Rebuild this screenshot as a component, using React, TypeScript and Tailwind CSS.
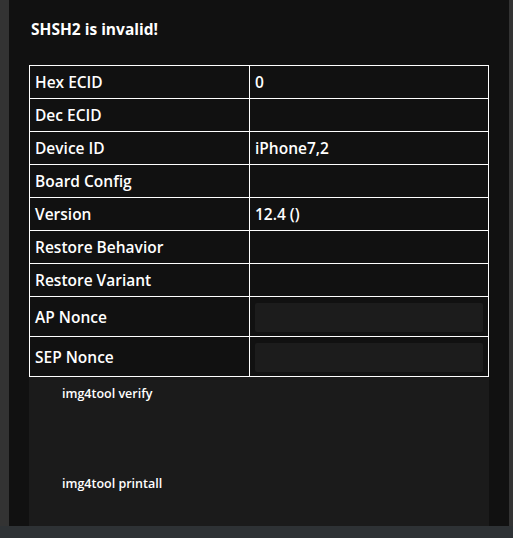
const ROWS: { label: string; value?: string; input?: boolean }[] = [
  { label: "Hex ECID", value: "0" },
  { label: "Dec ECID", value: "" },
  { label: "Device ID", value: "iPhone7,2" },
  { label: "Board Config", value: "" },
  { label: "Version", value: "12.4 ()" },
  { label: "Restore Behavior", value: "" },
  { label: "Restore Variant", value: "" },
  { label: "AP Nonce", input: true },
  { label: "SEP Nonce", input: true },
];

export default function App() {
  return (
    <div className="flex h-[538px] w-[513px] flex-col overflow-hidden font-['Open_Sans',sans-serif] text-white">
      <div className="flex h-[526px]">
        <div className="w-[9px] bg-[#333333]" />
        <div className="flex flex-1 flex-col bg-[#111111] pl-[20px]">
          <h1 className="pl-[2px] pt-[19px] text-[15.5px] font-bold leading-[20px]">SHSH2 is invalid!</h1>

          <table className="mt-[26px] w-[460px] table-fixed border-collapse">
            <tbody>
              {ROWS.map((r) => (
                <tr key={r.label} className={r.input ? "h-[40px]" : "h-[33px]"}>
                  <td className="w-[220px] border border-white px-[5px] py-0 text-[15.5px] font-semibold leading-[20px]">
                    {r.label}
                  </td>
                  <td className="border border-white px-[5px] py-0 text-[15.5px] font-semibold leading-[20px]">
                    {r.input ? (
                      <div className="mt-[1px] h-[29px] w-full rounded-[2px] bg-[#1c1c1c]" />
                    ) : (
                      r.value
                    )}
                  </td>
                </tr>
              ))}
            </tbody>
          </table>

          {/* verify / printall output */}
          <div className="w-[460px] flex-1 bg-[#1b1b1b] pl-[33px] pt-[8px] text-[12.5px] font-semibold leading-[18px]">
            <p>img4tool verify</p>
            <div className="h-[72px]" />
            <p>img4tool printall</p>
          </div>
        </div>
        <div className="w-[4px] bg-[#333333]" />
      </div>
      <div className="h-[12px] bg-[#2e3235]" />
    </div>
  );
}
